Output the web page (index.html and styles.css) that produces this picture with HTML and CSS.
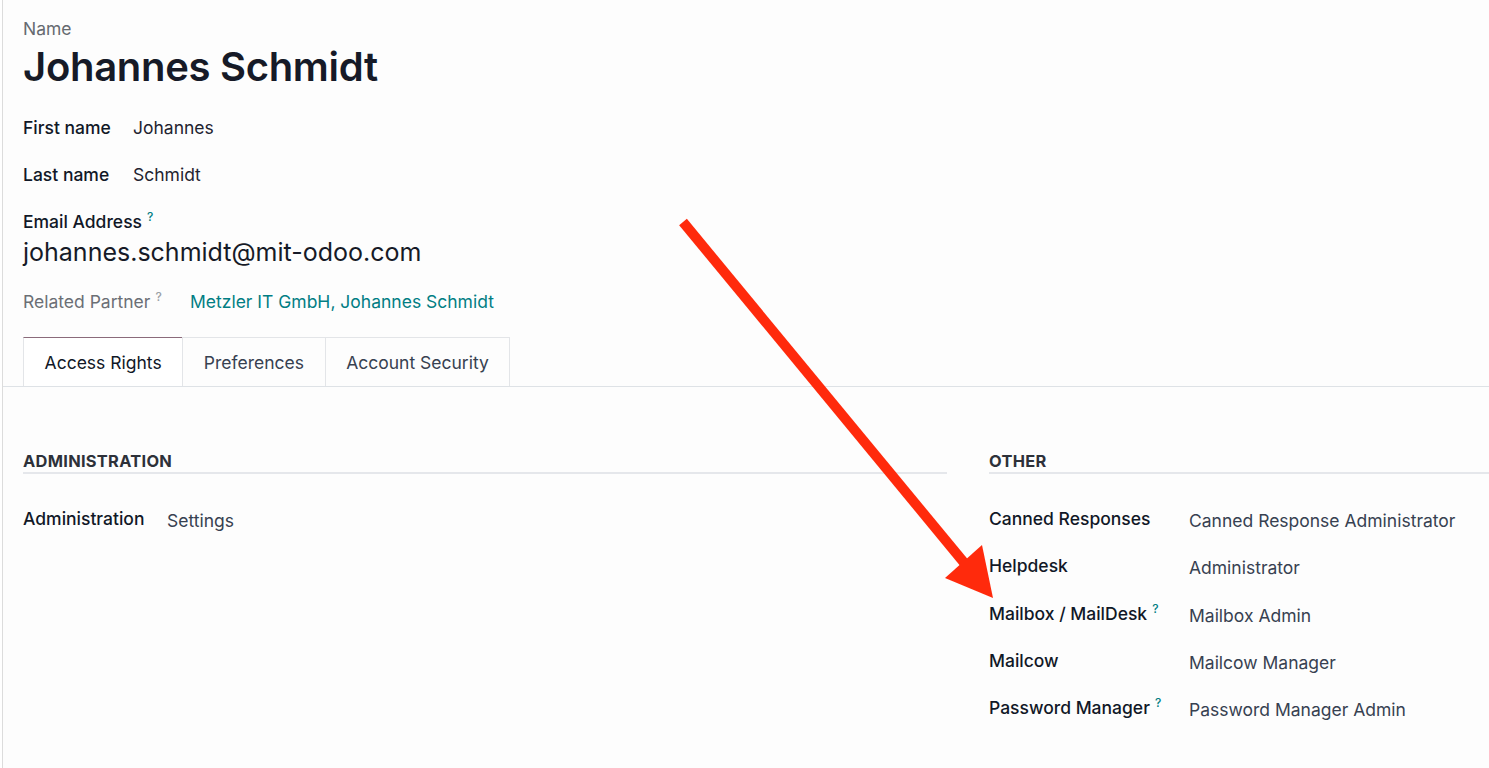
FILE: index.html
```html
<!DOCTYPE html>
<html lang="en">
<head>
<meta charset="utf-8">
<title>Johannes Schmidt</title>
<link rel="stylesheet" href="styles.css">
</head>
<body>
<div class="sheet">
  <div class="title-block">
    <div class="name-label">Name</div>
    <h1 class="name">Johannes Schmidt</h1>
  </div>
  <div class="field-row first"><span class="flabel">First name</span><span class="fvalue">Johannes</span></div>
  <div class="field-row"><span class="flabel">Last name</span><span class="fvalue">Schmidt</span></div>
  <div class="email-block">
    <div class="flabel">Email Address<sup class="help">?</sup></div>
    <div class="email">johannes.schmidt@mit-odoo.com</div>
  </div>
  <div class="partner-row">
    <span class="plabel">Related Partner<sup class="help light">?</sup></span>
    <a class="plink">Metzler IT GmbH, Johannes Schmidt</a>
  </div>
  <div class="tabs">
    <div class="tab active">Access Rights</div>
    <div class="tab">Preferences</div>
    <div class="tab">Account Security</div>
  </div>
  <div class="groups">
    <div class="group">
      <div class="group-title">ADMINISTRATION</div>
      <div class="grows left">
        <span class="glabel">Administration</span><span class="gvalue">Settings</span>
      </div>
    </div>
    <div class="group">
      <div class="group-title">OTHER</div>
      <div class="grows right">
        <span class="glabel">Canned Responses</span><span class="gvalue">Canned Response Administrator</span>
        <span class="glabel">Helpdesk</span><span class="gvalue">Administrator</span>
        <span class="glabel">Mailbox / MailDesk<sup class="help">?</sup></span><span class="gvalue">Mailbox Admin</span>
        <span class="glabel">Mailcow</span><span class="gvalue">Mailcow Manager</span>
        <span class="glabel">Password Manager<sup class="help">?</sup></span><span class="gvalue">Password Manager Admin</span>
      </div>
    </div>
  </div>
</div>
<svg class="arrow" width="1489" height="768" viewBox="0 0 1489 768">
  <line x1="683" y1="222" x2="966" y2="565" stroke="#ff2a0c" stroke-width="10"/>
  <polygon points="945,578 982,545 993,598" fill="#ff2a0c"/>
</svg>
</body>
</html>
```
FILE: styles.css
```css
html, body {
  margin: 0;
  padding: 0;
  background: #ffffff;
}
body {
  font-family: Inter, "Noto Sans", sans-serif;
  color: #1f2330;
  position: relative;
  height: 768px;
  overflow: hidden;
}
.sheet {
  margin-left: 2px;
  border-left: 1px solid #dcdcdc;
  padding-left: 20px;
  min-height: 768px;
  box-sizing: border-box;
  background: #fdfdfd;
}
.title-block {
  padding-top: 19px;
}
.name-label {
  font-size: 17.5px;
  color: #666a70;
  line-height: 20px;
}
.name {
  margin: 3px 0 0;
  font-size: 40px;
  font-weight: 600;
  line-height: 50px;
  letter-spacing: -0.3px;
  color: #161a27;
}
.field-row {
  display: flex;
  align-items: baseline;
  font-size: 17.5px;
  line-height: 22px;
  margin-top: 25px;
}
.flabel {
  width: 110px;
  font-weight: 500;
  color: #111827;
}
.fvalue {
  color: #1f2330;
}
.email-block {
  margin-top: 25px;
  font-size: 17.5px;
  line-height: 22px;
}
.email-block .flabel {
  width: auto;
}
.email {
  font-size: 25px;
  line-height: 32px;
  color: #161a27;
  margin-top: 3px;
}
.help {
  font-size: 12px;
  line-height: 0;
  color: #017e84;
  margin-left: 5px;
  vertical-align: 7px;
  font-weight: 500;
}
.help.light {
  color: #9aa0a6;
}
.partner-row {
  display: flex;
  align-items: baseline;
  margin-top: 23px;
  font-size: 17.5px;
  line-height: 22px;
}
.plabel {
  width: 167px;
  color: #6b6f75;
}
.plink {
  color: #017e84;
}
.tabs {
  display: flex;
  margin-top: 24px;
  margin-left: -20px;
  padding-left: 20px;
  border-bottom: 1px solid #dee2e6;
}
.tab {
  height: 48px;
  display: flex;
  align-items: center;
  padding: 0 20.6px;
  font-size: 17.5px;
  color: #374151;
  border: 1px solid #e3e5e8;
  border-bottom: none;
  margin-left: -1px;
}
.tab:first-child {
  margin-left: 0;
}
.tab.active {
  background: #ffffff;
  color: #111827;
  border-top: 1px solid #8a6a7a;
  border-left: 1px solid #e3e5e8;
}
.groups {
  display: grid;
  grid-template-columns: 924px 1fr;
  column-gap: 42px;
  margin-top: 64px;
}
.group-title {
  font-size: 16.4px;
  font-weight: 700;
  letter-spacing: 0.3px;
  color: #2d3139;
  line-height: 20px;
  padding-bottom: 1px;
  border-bottom: 2px solid #e5e7eb;
}
.grows {
  display: grid;
  row-gap: 23.3px;
  margin-top: 34px;
  font-size: 17.5px;
  line-height: 22px;
}
.grows.left {
  grid-template-columns: 144px 1fr;
}
.grows.right {
  grid-template-columns: 200px 1fr;
}
.glabel {
  font-weight: 500;
  color: #111827;
}
.gvalue {
  color: #374151;
  padding-top: 2px;
}
.arrow {
  position: absolute;
  left: 0;
  top: 0;
  pointer-events: none;
}
```
